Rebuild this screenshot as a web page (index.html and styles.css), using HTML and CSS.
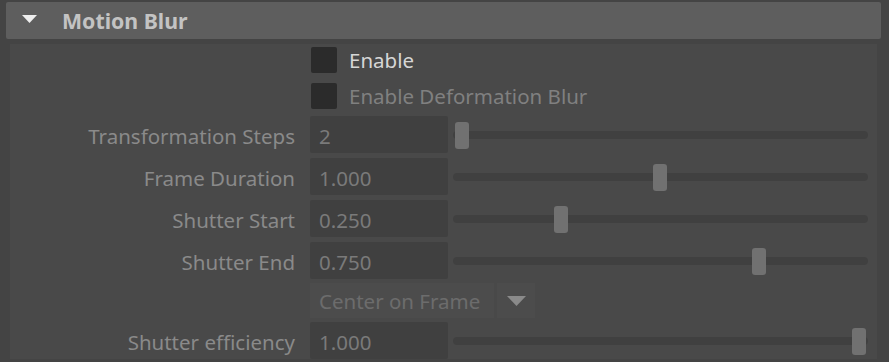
FILE: index.html
```html
<!DOCTYPE html>
<html>
<head>
<meta charset="utf-8">
<link rel="stylesheet" href="styles.css">
</head>
<body>
<div class="editor">
  <div class="frame-header">
    <svg class="caret" width="15" height="8" viewBox="0 0 15 8"><polygon points="0,0 15,0 7.5,8" fill="#eeeeee"/></svg>
    <span class="frame-title">Motion Blur</span>
  </div>
  <div class="frame-body">
    <div class="check-row">
      <span class="checkbox"></span>
      <span class="check-label on">Enable</span>
    </div>
    <div class="check-row">
      <span class="checkbox"></span>
      <span class="check-label">Enable Deformation Blur</span>
    </div>
    <div class="attr-row first">
      <span class="attr-label">Transformation Steps</span>
      <span class="field">2</span>
      <div class="slider"><span class="handle" style="left: 2px"></span></div>
    </div>
    <div class="attr-row">
      <span class="attr-label">Frame Duration</span>
      <span class="field">1.000</span>
      <div class="slider"><span class="handle" style="left: 200px"></span></div>
    </div>
    <div class="attr-row">
      <span class="attr-label">Shutter Start</span>
      <span class="field">0.250</span>
      <div class="slider"><span class="handle" style="left: 101px"></span></div>
    </div>
    <div class="attr-row">
      <span class="attr-label">Shutter End</span>
      <span class="field">0.750</span>
      <div class="slider"><span class="handle" style="left: 299px"></span></div>
    </div>
    <div class="combo-row">
      <span class="combo">Center on Frame</span>
      <span class="combo-btn"><svg width="19" height="10" viewBox="0 0 19 10"><polygon points="0,0 19,0 9.5,10" fill="#8a8a8a"/></svg></span>
    </div>
    <div class="attr-row last">
      <span class="attr-label">Shutter efficiency</span>
      <span class="field">1.000</span>
      <div class="slider"><span class="handle" style="left: 399px"></span></div>
    </div>
  </div>
</div>
</body>
</html>
```
FILE: styles.css
```css
html, body {
  margin: 0;
  padding: 0;
  background: #444444;
  width: 889px;
  height: 362px;
  overflow: hidden;
  font-family: "Noto Sans", "Open Sans", sans-serif;
  font-size: 20.5px;
}

.editor {
  padding-top: 2px;
}

.frame-header {
  margin-left: 6px;
  width: 875px;
  height: 37px;
  background: #5e5e5e;
  border-radius: 2px;
  display: flex;
  align-items: center;
}

.caret {
  margin-left: 16px;
  margin-top: -3px;
  flex: none;
}

.frame-title {
  margin-left: 25px;
  font-weight: bold;
  font-size: 21.3px;
  color: #c3c3c3;
}

.frame-body {
  margin-top: 5px;
  margin-left: 10px;
  width: 867px;
  height: 315px;
  background: #494949;
  padding-top: 3px;
  box-sizing: border-box;
  display: flex;
  flex-direction: column;
}

.check-row {
  display: flex;
  align-items: center;
  height: 26px;
  padding-left: 301px;
  margin-bottom: 10px;
}

.checkbox {
  width: 26px;
  height: 26px;
  background: #2b2b2b;
  border-radius: 2px;
  flex: none;
}

.check-label {
  margin-left: 12px;
  color: #808080;
}

.check-label.on {
  color: #d6d6d6;
}

.attr-row {
  display: flex;
  align-items: center;
  height: 37px;
  margin-bottom: 5px;
}

.attr-row.first {
  margin-top: -3px;
}

.attr-row.last {
  margin-bottom: 0;
}

.attr-label {
  width: 285px;
  padding-top: 3px;
  text-align: right;
  color: #8a8a8a;
  flex: none;
}

.field {
  margin-left: 15px;
  width: 138px;
  height: 37px;
  box-sizing: border-box;
  padding-left: 9px;
  padding-top: 2px;
  line-height: 37px;
  background: #404040;
  border-radius: 2px;
  color: #7a7a7a;
  flex: none;
}

.slider {
  position: relative;
  margin-left: 5px;
  width: 415px;
  height: 8px;
  background: #404040;
  border-radius: 4px;
  flex: none;
}

.handle {
  position: absolute;
  top: -9px;
  width: 14px;
  height: 27px;
  background: #717171;
  border-radius: 3px;
}

.combo-row {
  display: flex;
  height: 35px;
  margin-top: -1px;
  margin-bottom: 4px;
  padding-left: 300px;
}

.combo {
  width: 184px;
  box-sizing: border-box;
  padding-left: 9px;
  padding-top: 1px;
  line-height: 35px;
  background: #4c4c4c;
  color: #6c6c6c;
}

.combo-btn {
  margin-left: 3px;
  width: 38px;
  background: #4c4c4c;
  display: flex;
  align-items: center;
  justify-content: center;
}
```
